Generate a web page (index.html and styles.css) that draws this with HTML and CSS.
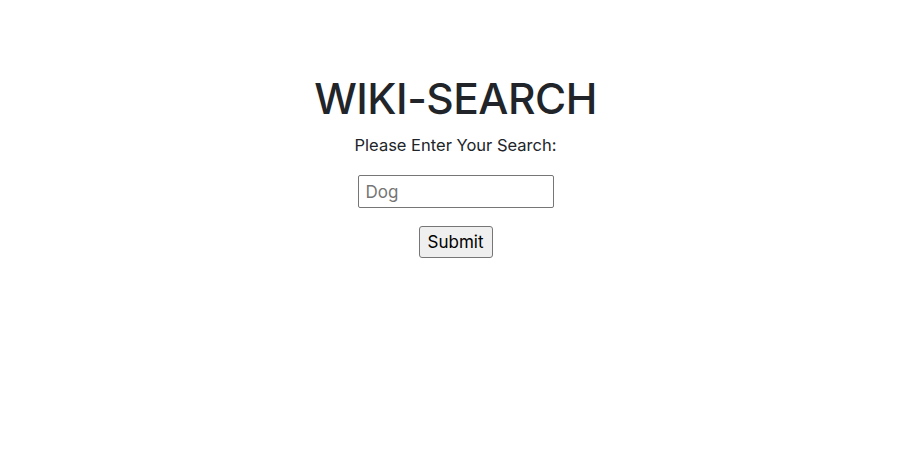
FILE: index.html
```html
<!DOCTYPE html>
<html>
<head>
<meta charset="utf-8">
<link rel="stylesheet" href="styles.css">
</head>
<body>
<main class="page">
  <h1 class="title">WIKI-SEARCH</h1>
  <p class="prompt">Please Enter Your Search:</p>
  <form class="search-form">
    <input class="search-input" type="text" placeholder="Dog">
    <button class="submit-btn" type="button">Submit</button>
  </form>
</main>
</body>
</html>
```
FILE: styles.css
```css
html, body {
  margin: 0;
  background: #fff;
}
.page {
  display: flex;
  flex-direction: column;
  align-items: center;
  padding: 73px 12px 0 0;
  font-family: Inter, "Liberation Sans", sans-serif;
  color: #212529;
}
.title {
  margin: 0;
  font-size: 42.5px;
  font-weight: 500;
  line-height: 52px;
  letter-spacing: -0.5px;
}
.prompt {
  margin: 8px 0 0;
  font-size: 16.5px;
  line-height: 24px;
}
.search-form {
  display: flex;
  flex-direction: column;
  align-items: center;
  margin-top: 18px;
}
.search-input {
  box-sizing: border-box;
  width: 196px;
  height: 33px;
  padding: 0 7px;
  border: 1px solid #767676;
  border-radius: 2px;
  font-family: Inter, "Liberation Sans", sans-serif;
  font-size: 17px;
  color: #000;
}
.search-input::placeholder {
  color: #757575;
}
.submit-btn {
  box-sizing: border-box;
  margin-top: 18px;
  width: 74px;
  height: 32px;
  padding: 0;
  border: 1px solid #767676;
  border-radius: 3px;
  background: #efefef;
  font-family: Inter, "Liberation Sans", sans-serif;
  font-size: 17px;
  color: #000;
}
```
